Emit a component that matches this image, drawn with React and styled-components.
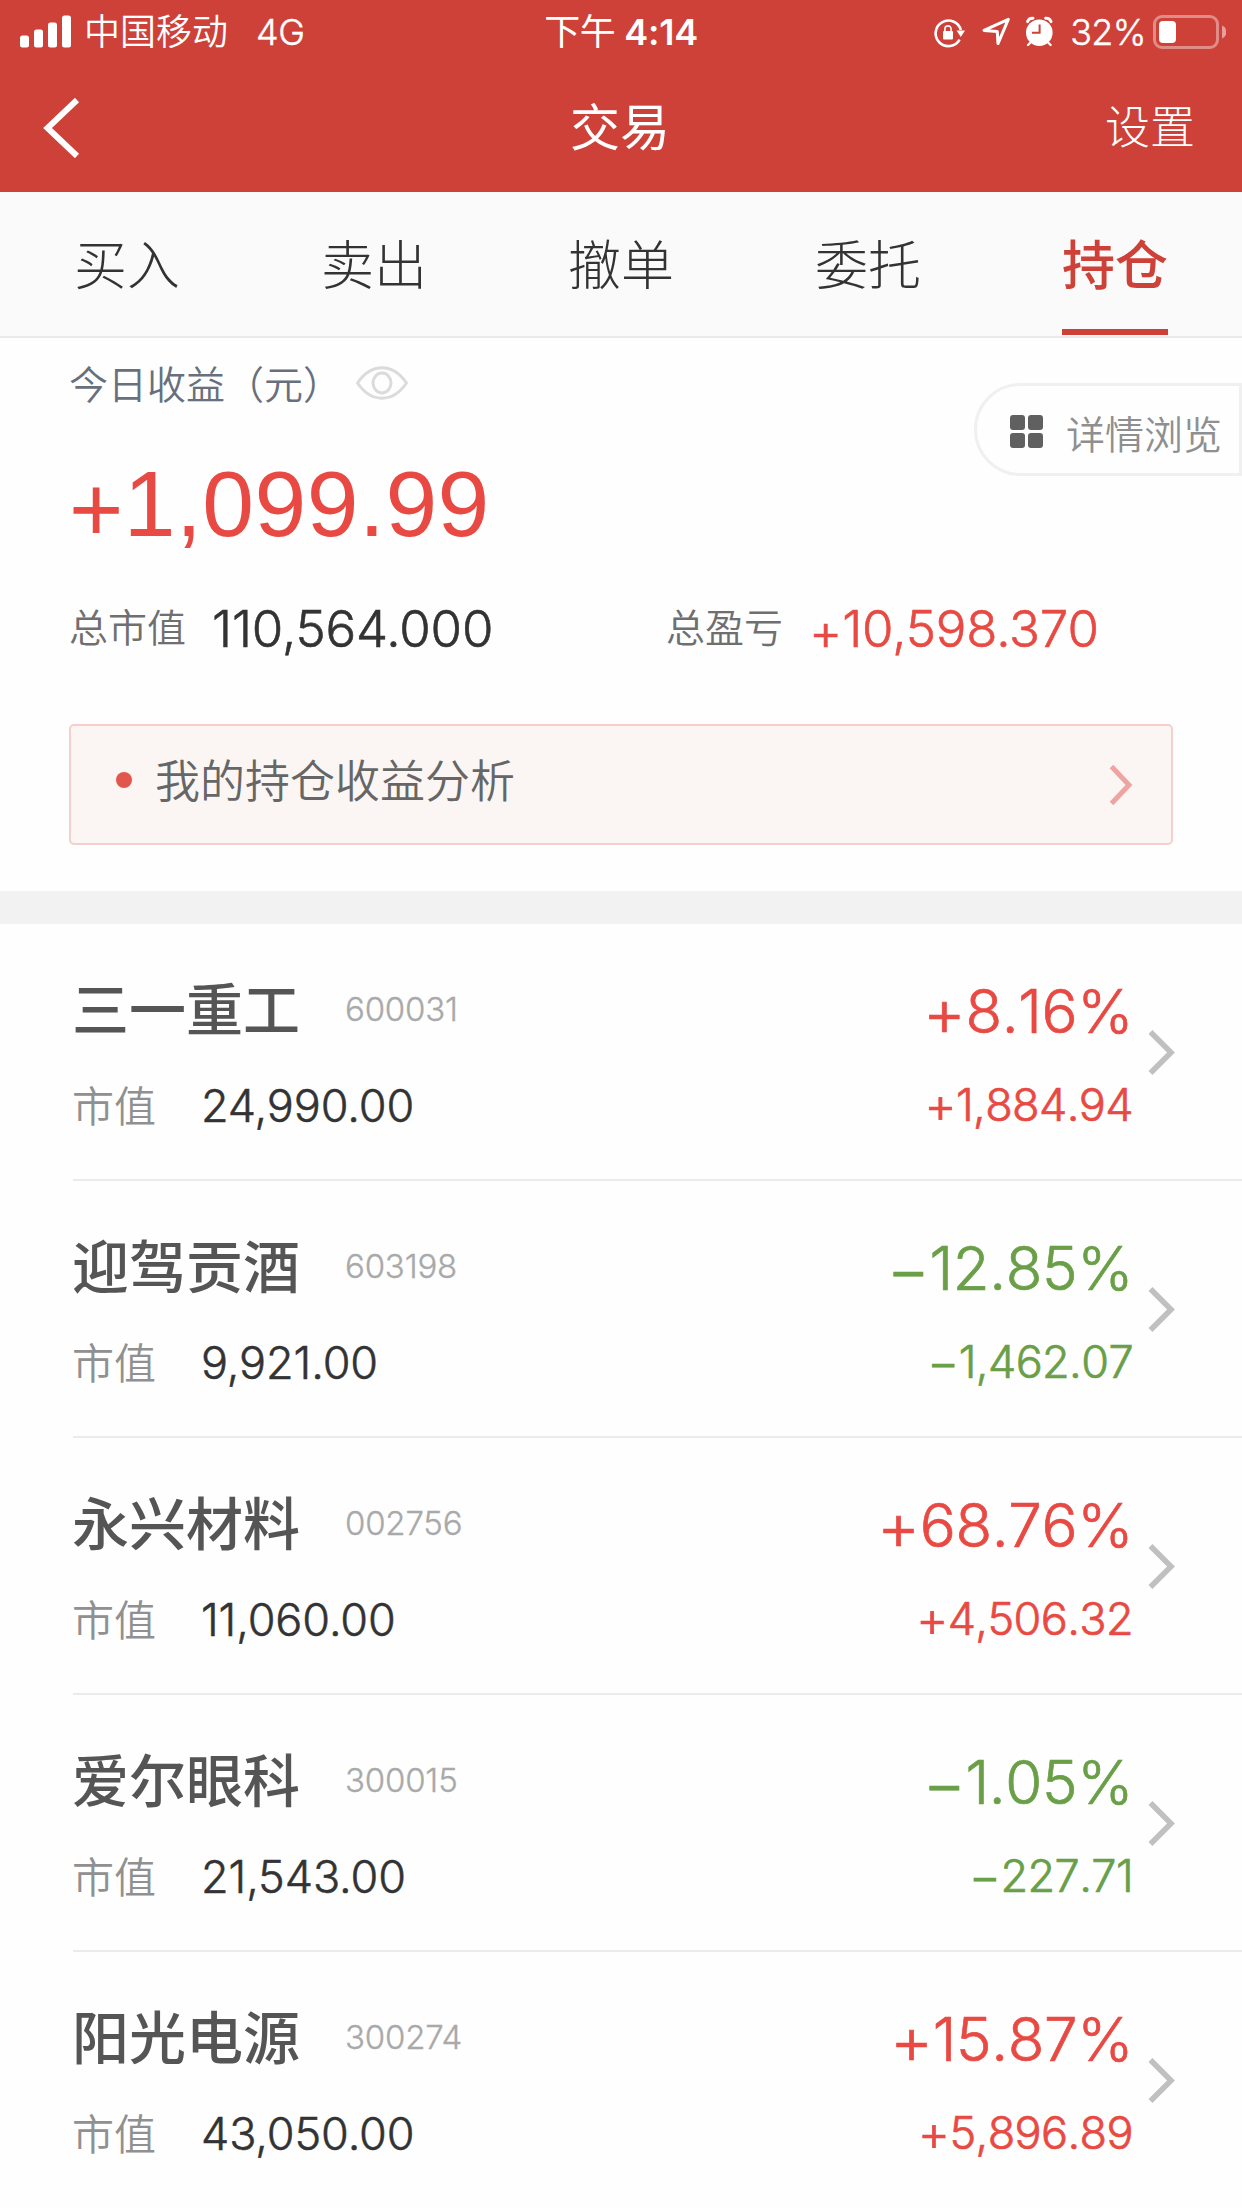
import { useState } from 'react';
import styled, { createGlobalStyle } from 'styled-components';

const GlobalStyle = createGlobalStyle`
  * {
    box-sizing: border-box;
  }

  body {
    margin: 0;
    background: #fefefe;
    font-family: 'Inter', 'Noto Sans CJK SC', sans-serif;
    font-weight: 350;
    line-height: 1.2;
    font-feature-settings: 'calt' 0;
  }
`;

const Page = styled.div`
  width: 1242px;
  height: 2208px;
  overflow: hidden;
  background: #fefefe;
`;

const Header = styled.header`
  height: 192px;
  background: #cd4138;
  color: #fff;
`;

const StatusBar = styled.div`
  display: grid;
  grid-template-columns: 1fr auto 1fr;
  align-items: center;
  height: 62px;
  padding: 0 16px 0 20px;
  font-size: 36px;
  line-height: 62px;
`;

const StatusGroup = styled.div`
  display: flex;
  align-items: center;
  justify-content: ${props => props.$end ? 'flex-end' : 'flex-start'};
`;

const Carrier = styled.span`
  margin: 1px 28px 0 12px;
`;

const Network = styled.span`
  letter-spacing: -0.5px;
  -webkit-text-stroke: 0.012em;
`;

const Clock = styled.span`
  margin-right: 4px;
  font-weight: 600;
  letter-spacing: -0.3px;
`;

const ClockPeriod = styled.span`
  font-weight: 400;
`;

const Percent = styled.span`
  margin: 0 7px 0 16px;
  letter-spacing: -0.6px;
  -webkit-text-stroke: 0.012em;
`;

const NavBar = styled.div`
  display: grid;
  grid-template-columns: 1fr auto 1fr;
  align-items: center;
  height: 130px;
  padding: 1px 47px 0 45px;
`;

const BackButton = styled.button`
  display: flex;
  width: 40px;
  margin-left: -3px;
  padding: 0;
  border: none;
  background: none;
  cursor: pointer;
`;

const Title = styled.h1`
  margin: 0;
  font-size: 50px;
  font-weight: 400;
  line-height: 60px;
`;

const Settings = styled.span`
  justify-self: end;
  padding-top: 1px;
  font-size: 45px;
  font-weight: 300;
  line-height: 60px;
`;

const Tabs = styled.nav`
  display: grid;
  grid-template-columns: repeat(5, 247px);
  justify-content: center;
  justify-items: center;
  height: 146px;
  border-bottom: 2px solid #e9eae9;
  background: #fafafa;
`;

const Tab = styled.button`
  height: 143px;
  padding: 4px 0 0;
  border: none;
  border-top: 6px solid transparent;
  border-bottom: 6px solid ${props => props.$active ? '#cd4138' : 'transparent'};
  background: none;
  color: ${props => props.$active ? '#cd4138' : '#333'};
  font-family: inherit;
  font-size: 53px;
  font-weight: ${props => props.$active ? 500 : 300};
  line-height: 64px;
  cursor: pointer;
`;

const Summary = styled.section`
  position: relative;
  height: 553px;
  padding: 17px 69px 0;
`;

const TodayLabel = styled.div`
  display: flex;
  align-items: center;
  gap: 14px;
  color: #67707c;
  font-size: 39px;
  line-height: 60px;

  svg {
    margin-bottom: 4px;
  }
`;

const TodayValue = styled.div`
  margin-top: 34px;
  color: #e84a43;
  font-family: 'Liberation Sans', sans-serif;
  font-size: 93px;
  font-weight: 400;
  line-height: 110px;
  letter-spacing: 0.5px;
`;

// the sign sits a little lower than the digits beside it
const Sign = styled.span`
  display: inline-block;
  line-height: 0.9;
  transform: translateY(0.05em);
`;

const WideSign = styled(Sign)`
  font-size: 1.1em;
`;

const Totals = styled.div`
  display: grid;
  grid-template-columns: 597px 1fr;
  margin-top: 40px;
`;

const Total = styled.div`
  display: flex;
  align-items: center;
  height: 60px;
`;

const TotalLabel = styled.span`
  width: 117px;
  margin-right: 26px;
  padding-bottom: 2px;
  color: #6f6f6f;
  font-size: 39px;
`;

const TotalValue = styled.span`
  color: ${props => props.$up ? '#e84a43' : '#333'};
  font-size: 51px;
  letter-spacing: -0.15px;
  -webkit-text-stroke: 0.012em;
`;

const DetailButton = styled.button`
  position: absolute;
  top: 45px;
  right: 0;
  display: flex;
  align-items: center;
  width: 268px;
  height: 93px;
  padding: 10px 0 0 33px;
  border: 3px solid #f0f0f0;
  border-radius: 47px 0 0 47px;
  background: #fefefe;
  color: #8f8f8f;
  font-family: inherit;
  font-size: 39px;
  font-weight: 350;
  line-height: 50px;
  white-space: nowrap;
  cursor: pointer;
`;

const DetailGrid = styled.span`
  display: grid;
  grid-template-columns: 15px 15px;
  gap: 3px;
  margin: 0 23px 6px 0;

  i {
    height: 15px;
    border-radius: 3px;
    background: #606060;
  }
`;

const Analysis = styled.div`
  display: flex;
  align-items: center;
  justify-content: space-between;
  height: 121px;
  margin-top: 65px;
  padding: 0 38px 0 45px;
  border: 2px solid #f4cfcb;
  border-radius: 5px;
  background: #fbf6f4;
`;

const AnalysisText = styled.div`
  display: flex;
  align-items: center;
  gap: 23px;
  padding-bottom: 5px;
  color: #666;
  font-size: 45px;
`;

const Dot = styled.i`
  width: 16px;
  height: 16px;
  margin-bottom: 4px;
  border-radius: 50%;
  background: #e2574c;
`;

const Divider = styled.div`
  height: 33px;
  background: #f2f2f2;
`;

const HoldingRow = styled.div`
  display: flex;
  height: 257px;
  margin-left: 73px;
  padding-right: 66px;
  border-bottom: 2px solid #ebebeb;

  &:last-child {
    border-bottom: none;
  }
`;

const StockInfo = styled.div`
  flex: 1;
  padding-top: 51px;
`;

const StockLine = styled.div`
  display: flex;
  align-items: center;
  height: 70px;
`;

const StockName = styled.span`
  width: 273px;
  margin-left: -1px;
  padding-top: 3px;
  color: #555;
  font-size: 57px;
  font-weight: 500;
`;

const StockCode = styled.span`
  color: #a9a9a9;
  font-size: 33px;
  font-weight: 300;
  letter-spacing: -0.2px;
  -webkit-text-stroke: 0.01em;
`;

const MarketLine = styled.div`
  display: flex;
  align-items: center;
  height: 60px;
  margin-top: 31px;
`;

const MarketLabel = styled.span`
  width: 129px;
  margin-left: -1px;
  padding-top: 3px;
  color: #909090;
  font-size: 42px;
`;

const MarketValue = styled.span`
  color: #333;
  font-size: 45px;
  letter-spacing: -0.1px;
  -webkit-text-stroke: 0.012em;
`;

const Profit = styled.div`
  padding-top: 52px;
  color: ${props => props.$up ? '#e84a43' : '#6a9f48'};
  font-kerning: none;
  text-align: right;
  -webkit-text-stroke: 0.7px;
`;

const ProfitRate = styled.div`
  font-size: 60px;
  line-height: 70px;
  letter-spacing: -0.4px;
`;

const ProfitAmount = styled.div`
  margin-top: 29px;
  font-size: 45px;
  line-height: 60px;
  letter-spacing: -0.6px;
`;

const RowArrow = styled.svg`
  margin: 105px 0 0 15px;
`;

const tabs = ['买入', '卖出', '撤单', '委托', '持仓'];

const holdings = [
  { name: '三一重工', code: '600031', value: '24,990.00', sign: '+', rate: '8.16%', amount: '1,884.94' },
  { name: '迎驾贡酒', code: '603198', value: '9,921.00', sign: '−', rate: '12.85%', amount: '1,462.07' },
  { name: '永兴材料', code: '002756', value: '11,060.00', sign: '+', rate: '68.76%', amount: '4,506.32' },
  { name: '爱尔眼科', code: '300015', value: '21,543.00', sign: '−', rate: '1.05%', amount: '227.71' },
  { name: '阳光电源', code: '300274', value: '43,050.00', sign: '+', rate: '15.87%', amount: '5,896.89' },
];

const SignalIcon = () => (
  <svg width="52" height="34" viewBox="0 0 52 34" fill="#fff">
    <rect x="0" y="20.5" width="9" height="12" rx="2.5" />
    <rect x="14" y="14.5" width="9" height="18" rx="2.5" />
    <rect x="28" y="7.5" width="9" height="25" rx="2.5" />
    <rect x="42" y="0.5" width="9" height="32" rx="2.5" />
  </svg>
);

const StatusIcons = () => (
  <svg width="120" height="34" viewBox="935 14 120 34" fill="none" stroke="#fff">
    <path d="M960.6 38.6A12.8 12.8 0 1 1 961.8 29" strokeWidth="2.6" />
    <path d="M957.5 29.5H966L961.8 36Z" fill="#fff" stroke="none" />
    <rect x="944" y="30" width="10" height="8.5" rx="1" fill="#fff" stroke="none" />
    <path d="M945.9 31V28a3.1 3.1 0 0 1 6.2 0v3" strokeWidth="1.6" />
    <path d="M1009.3 18.3L985 29.4L998.3 30.6L999 42.6Z" strokeWidth="3" strokeLinejoin="round" />
    <circle cx="1040.3" cy="31.7" r="13.3" fill="#fff" stroke="none" />
    <path d="M1028.6 20.6a5.2 5.2 0 0 1 5.4-3.4M1052 20.6a5.2 5.2 0 0 0-5.4-3.4" strokeWidth="3" strokeLinecap="round" />
    <path d="M1032 41l-3 3M1048.6 41l3 3" strokeWidth="2.4" strokeLinecap="round" />
    <path d="M1040.6 23.5V31.7H1033" stroke="#cd4138" strokeWidth="2" />
  </svg>
);

const BatteryIcon = () => (
  <svg width="73" height="34" viewBox="0 0 73 34" fill="#fff">
    <rect x="1.5" y="1.5" width="63" height="31" rx="7.5" fill="none" stroke="#fff" strokeWidth="3" opacity="0.4" />
    <rect x="6" y="6" width="17" height="22" rx="4" />
    <path d="M69 10.5A7 7 0 0 1 69 23.5Z" opacity="0.5" />
  </svg>
);

const EyeIcon = () => (
  <svg width="52" height="34" viewBox="0 0 52 34" fill="none" stroke="#dbdbdb" strokeWidth="3">
    <path d="M1.5 17C9 6 17 1.8 26 1.8S43 6 50.5 17C43 28 35 32.2 26 32.2S9 28 1.5 17Z" strokeLinejoin="round" />
    <ellipse cx="26" cy="17" rx="9" ry="10" />
  </svg>
);

const App = () => {
  const [activeTab, setActiveTab] = useState('持仓');

  return (
    <Page lang="zh-CN">
      <GlobalStyle />
      <Header>
        <StatusBar>
          <StatusGroup>
            <SignalIcon />
            <Carrier>中国移动</Carrier>
            <Network>4G</Network>
          </StatusGroup>
          <Clock><ClockPeriod>下午</ClockPeriod> 4:14</Clock>
          <StatusGroup $end>
            <StatusIcons />
            <Percent>32%</Percent>
            <BatteryIcon />
          </StatusGroup>
        </StatusBar>
        <NavBar>
          <BackButton>
            <svg width="40" height="60" viewBox="0 0 40 60" fill="none" stroke="#fff" strokeWidth="6">
              <path d="M35 2L5.5 30L35 58" />
            </svg>
          </BackButton>
          <Title>交易</Title>
          <Settings>设置</Settings>
        </NavBar>
      </Header>

      <Tabs>
        {tabs.map(tab => (
          <Tab key={tab} $active={tab === activeTab} onClick={() => setActiveTab(tab)}>
            {tab}
          </Tab>
        ))}
      </Tabs>

      <Summary>
        <TodayLabel>
          <span>今日收益（元）</span>
          <EyeIcon />
        </TodayLabel>
        <TodayValue><Sign>+</Sign>1,099.99</TodayValue>
        <Totals>
          <Total>
            <TotalLabel>总市值</TotalLabel>
            <TotalValue>110,564.000</TotalValue>
          </Total>
          <Total>
            <TotalLabel>总盈亏</TotalLabel>
            <TotalValue $up><Sign>+</Sign>10,598.370</TotalValue>
          </Total>
        </Totals>
        <Analysis>
          <AnalysisText>
            <Dot />
            我的持仓收益分析
          </AnalysisText>
          <svg width="24" height="42" viewBox="0 0 24 42" fill="none" stroke="#eea5a1" strokeWidth="5">
            <path d="M2.5 2.5L20 21L2.5 39.5" />
          </svg>
        </Analysis>
        <DetailButton>
          <DetailGrid><i /><i /><i /><i /></DetailGrid>
          详情浏览
        </DetailButton>
      </Summary>

      <Divider />

      <div>
        {holdings.map(item => (
          <HoldingRow key={item.code}>
            <StockInfo>
              <StockLine>
                <StockName>{item.name}</StockName>
                <StockCode>{item.code}</StockCode>
              </StockLine>
              <MarketLine>
                <MarketLabel>市值</MarketLabel>
                <MarketValue>{item.value}</MarketValue>
              </MarketLine>
            </StockInfo>
            <Profit $up={item.sign === '+'}>
              <ProfitRate><WideSign>{item.sign}</WideSign>{item.rate}</ProfitRate>
              <ProfitAmount><WideSign>{item.sign}</WideSign>{item.amount}</ProfitAmount>
            </Profit>
            <RowArrow width="28" height="47" viewBox="0 0 28 47" fill="none" stroke="#c0c0c0" strokeWidth="5.5">
              <path d="M2.5 3L23 23.5L2.5 44" />
            </RowArrow>
          </HoldingRow>
        ))}
      </div>
    </Page>
  );
};

export default App;
